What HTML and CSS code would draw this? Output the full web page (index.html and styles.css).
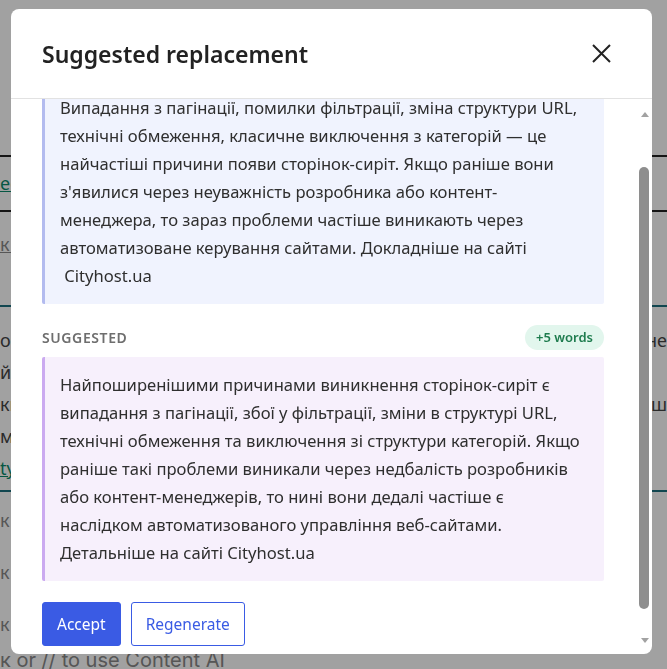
FILE: index.html
```html
<!DOCTYPE html>
<html lang="uk">
<head>
  <meta charset="UTF-8">
  <meta name="viewport" content="width=device-width, initial-scale=1.0">
  <title>Suggested replacement</title>
  <link rel="stylesheet" href="styles.css">
</head>
<body>

  <div class="page">
    <div class="row row-dark row-short"><span class="link">ees</span></div>
    <div class="row row-dark row-tall"><span class="muted under">к с</span></div>
    <div class="row-teal">
      <p><span>о …</span><span>не</span></p>
      <p><span>й …</span></p>
      <p><span>кн …</span><span>ш</span></p>
      <p><span>ма …</span></p>
      <p><span class="link">ty</span></p>
    </div>
    <div class="row"><span class="muted">к с</span></div>
    <div class="row"><span class="muted">к с</span></div>
    <div class="row"><span class="muted">к с</span></div>
    <div class="hint">к or // to use Content AI</div>
  </div>

  <div class="overlay">
    <div class="modal">
      <div class="modal-header">
        <h2>Suggested replacement</h2>
        <button class="close-btn" aria-label="Close">
          <svg width="19" height="19" viewBox="0 0 19 19"><path d="M1 1 L18 18 M18 1 L1 18" stroke="#222" stroke-width="2" fill="none"/></svg>
        </button>
      </div>

      <div class="modal-body">
        <div class="scroll-area" id="scrollArea">
          <div class="section">
            <div class="section-head">
              <span class="section-label">Original</span>
            </div>
            <div class="text-block original">
              Випадання з пагінації, помилки фільтрації, зміна структури URL,<br>
              технічні обмеження, класичне виключення з категорій — це<br>
              найчастіші причини появи сторінок-сиріт. Якщо раніше вони<br>
              з'явилися через неуважність розробника або контент-<br>менеджера, то зараз проблеми частіше виникають через<br>
              автоматизоване керування сайтами. Докладніше на сайті<br>
              &nbsp;Cityhost.ua
            </div>
          </div>

          <div class="section">
            <div class="section-head">
              <span class="section-label">Suggested</span>
              <span class="badge">+5 words</span>
            </div>
            <div class="text-block suggested">
              Найпоширенішими причинами виникнення сторінок-сиріт є<br>
              випадання з пагінації, збої у фільтрації, зміни в структурі URL,<br>
              технічні обмеження та виключення зі структури категорій. Якщо<br>
              раніше такі проблеми виникали через недбалість розробників<br>
              або контент-менеджерів, то нині вони дедалі частіше є<br>
              наслідком автоматизованого управління веб-сайтами.<br>
              Детальніше на сайті Cityhost.ua
            </div>
          </div>

          <div class="actions">
            <button class="btn btn-primary">Accept</button>
            <button class="btn btn-outline">Regenerate</button>
          </div>
        </div>

        <div class="scrollbar">
          <span class="arrow arrow-up"></span>
          <div class="track" id="track"><div class="thumb" id="thumb"></div></div>
          <span class="arrow arrow-down"></span>
        </div>
      </div>
    </div>
  </div>

  <script>
    const area = document.getElementById('scrollArea');
    const track = document.getElementById('track');
    const thumb = document.getElementById('thumb');

    area.scrollTop = 63;

    // size and place the thumb from the scroll position
    function syncThumb() {
      const trackHeight = track.clientHeight;
      const ratio = area.clientHeight / area.scrollHeight;
      thumb.style.height = Math.round(trackHeight * ratio) + 'px';
      thumb.style.marginTop = Math.round(trackHeight * area.scrollTop / area.scrollHeight) + 'px';
    }

    area.addEventListener('scroll', syncThumb);
    syncThumb();
  </script>

</body>
</html>
```

FILE: styles.css
```css
body {
  font-family: "Noto Sans", "Open Sans", sans-serif;
  margin: 0;
  background-color: white;
  color: #333;
}

/* page behind the dialog */
.page {
  padding-top: 155px;
  font-size: 18px;
  line-height: 24px;
  color: #444;
}

.row {
  box-sizing: border-box;
  height: 52px;
  padding-top: 16px;
}

.row-dark {
  border-top: 2px solid #222;
}

.row-short {
  height: 55px;
  padding-top: 14px;
}

.row-tall {
  height: 95px;
  padding-top: 20px;
}

.row-teal {
  border-top: 2px solid #1c6f7e;
  border-bottom: 2px solid #1c6f7e;
  padding: 17px 0 6px;
}

.row-teal p {
  margin: 0;
  line-height: 32px;
  display: flex;
  justify-content: space-between;
}

.link {
  color: #0b8a6a;
  text-decoration: underline;
}

.muted {
  color: #888;
}

.under {
  text-decoration: underline;
}

.hint {
  font-size: 20px;
  color: #888;
  font-family: Inter, sans-serif;
}

/* dialog */
.overlay {
  position: fixed;
  inset: 0;
  background-color: rgba(0, 0, 0, 0.37);
}

.modal {
  margin: 9px 0 0 11px;
  width: 641px;
  height: 645px;
  background-color: white;
  border-radius: 8px;
  display: flex;
  flex-direction: column;
  overflow: hidden;
}

.modal-header {
  display: flex;
  align-items: center;
  justify-content: space-between;
  height: 89px;
  padding: 0 41px 0 31px;
  border-bottom: 1px solid #e2e2e2;
  flex-shrink: 0;
}

.modal-header h2 {
  margin: 0;
  font-size: 23px;
  font-weight: 600;
  color: #222;
}

.close-btn {
  background: none;
  border: none;
  padding: 0;
  cursor: pointer;
  display: flex;
}

.modal-body {
  flex: 1;
  min-height: 0;
  display: flex;
}

.scroll-area {
  flex: 1;
  overflow: hidden;
  padding: 12px 33px 34px 31px;
}

/* classic scrollbar rail with arrow buttons */
.scrollbar {
  width: 15px;
  display: flex;
  flex-direction: column;
  align-items: center;
  flex-shrink: 0;
}

.arrow {
  display: flex;
  justify-content: center;
}

.arrow::before {
  content: "";
  border-left: 4.5px solid transparent;
  border-right: 4.5px solid transparent;
}

.arrow-up {
  height: 18px;
  padding-top: 8px;
  box-sizing: border-box;
}

.arrow-up::before {
  border-bottom: 5px solid #a2a2a2;
}

.arrow-down {
  height: 24px;
  padding-top: 8px;
  box-sizing: border-box;
}

.arrow-down::before {
  border-top: 5px solid #a2a2a2;
}

.track {
  flex: 1;
  width: 100%;
  display: flex;
  flex-direction: column;
  align-items: center;
}

.thumb {
  width: 10px;
  margin-left: -1px;
  background-color: #8e8e8e;
  border-radius: 5px;
}

.section {
  margin-bottom: 21px;
}

.section-head {
  display: flex;
  align-items: center;
  justify-content: space-between;
  height: 25px;
  margin-bottom: 7px;
}

.section-label {
  font-size: 14px;
  font-weight: 600;
  letter-spacing: 0.6px;
  text-transform: uppercase;
  color: #6e6e6e;
}

.badge {
  background-color: #e2f6ed;
  color: #1e7c4e;
  font-size: 13px;
  font-weight: 600;
  padding: 3px 11px 4px;
  border-radius: 13px;
}

.text-block {
  font-size: 16.6px;
  line-height: 28px;
  padding: 14px 15px;
  border-left: 3px solid;
  border-radius: 2px;
  color: #2f2f2f;
}

.original {
  background-color: #f0f3fe;
  border-left-color: #b3bbef;
}

.suggested {
  background-color: #f7f0fc;
  border-left-color: #cbaaf0;
}

.actions {
  display: flex;
  gap: 10px;
}

.btn {
  font-family: inherit;
  font-size: 15.5px;
  height: 44px;
  padding: 0 14px;
  border-radius: 3px;
  cursor: pointer;
}

.btn-primary {
  background-color: #3a5be4;
  border: 1px solid #3a5be4;
  color: white;
}

.btn-outline {
  background-color: white;
  border: 1px solid #3a5be4;
  color: #3a5be4;
}
```
